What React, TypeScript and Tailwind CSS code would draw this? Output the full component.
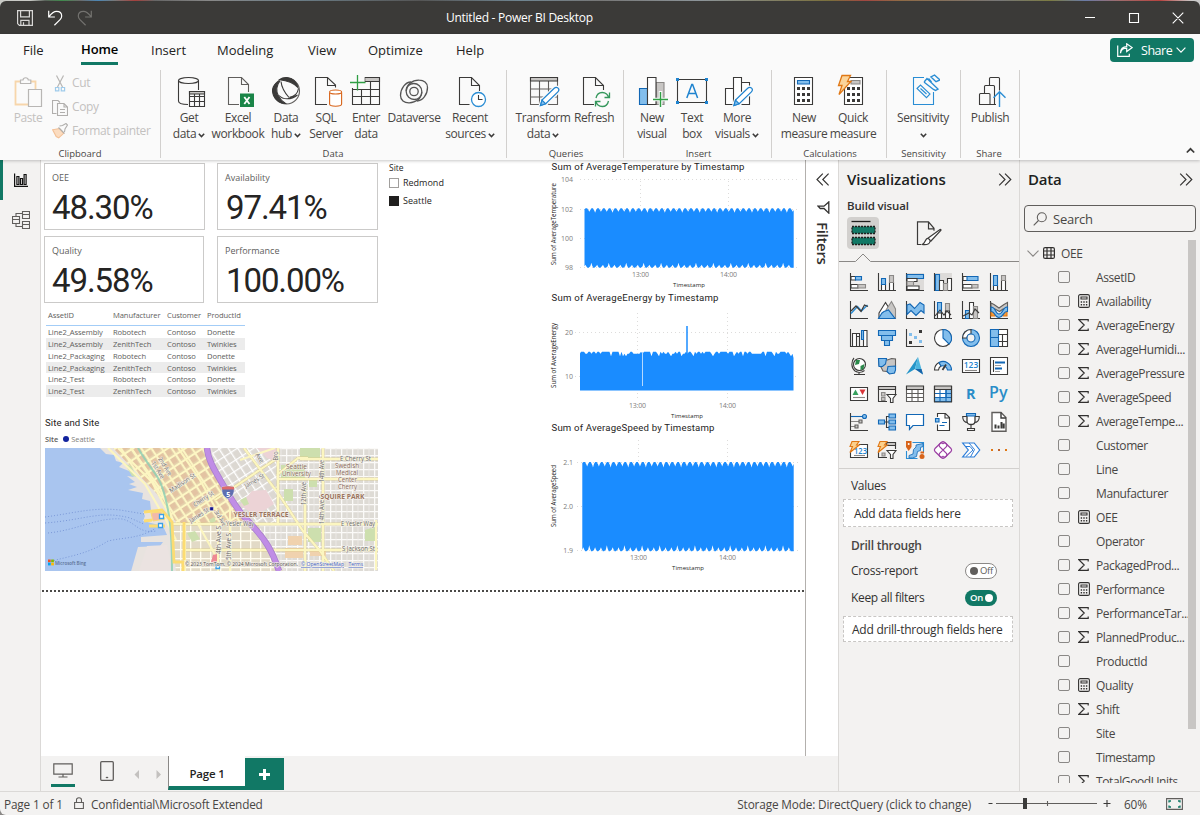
import React from "react";

const D = "#3b3a39";
const B = "#1267b5";
const L = "#83beec";
const G = "#c8c6c4";

/* ---------- shared bits ---------- */

function Chev({ className = "" }: { className?: string }) {
  return (
    <svg className={className} width="7" height="5" viewBox="0 0 7 5" fill="none" stroke={D} strokeWidth="1.5">
      <path d="M0.8 0.8 3.5 3.6 6.2 0.8" />
    </svg>
  );
}

function DoubleChevron({ left = false }: { left?: boolean }) {
  return (
    <svg width="14" height="13" viewBox="0 0 14 13" fill="none" stroke="#323130" strokeWidth="1.15">
      {left ? <path d="M6.8.7 1 6.5l5.8 5.8M12.6.7 6.8 6.5l5.8 5.8" /> : <path d="M1.2.7 7 6.5l-5.8 5.8M7 .7l5.8 5.8L7 12.3" />}
    </svg>
  );
}

/* ---------- title bar ---------- */

function TitleBar() {
  return (
    <div className="flex h-[34px] shrink-0 bg-[linear-gradient(90deg,#c9cac6_0_30px,#5b625b_45px,#3f8a4c_62px,#6a6a6a_80px,#4c86b4_98px,#777_115px,#a5403c_135px,#666_155px,#888_210px,#6a7c86_300px,#555_420px,#6f8591_520px,#777_600px,#8c9499_700px,#7a6f3c_830px,#a14741_865px,#8f6a45_900px,#777_1000px,#7c7b42_1050px,#6a7ba6_1085px,#a06b6b_1120px,#b6433f_1160px,#c9c9c9_1192px)] pt-px">
      <div className="flex h-[33px] w-full items-center rounded-t-[6px] bg-[#3b3a38]">
        <svg className="ml-4 mt-px" width="80" height="18" viewBox="16 9 80 18" fill="none" stroke="#d8d7d6" strokeWidth="1.2">
          <path d="M17.6 10.6h14.8v14.8H19.4l-1.8-1.8zM20.6 10.6v6.2h8.8v-6.2M20.8 25.4v-5h8.2v5M23.5 22.3v3" />
          <path d="M48.7 10.8v6.2h6.2M49 16.6c2.4-3 4.700-5.200 7.500-5.200 3.400 0 5.200 2.200 5.200 4.700 0 1.600-.6 2.600-1.600 3.600l-5.700 5.500" stroke="#fff" />
          <path d="M91.300 10.800v6.200h-6.200M91 16.600c-2.400-3-4.700-5.200-7.500-5.200-3.400 0-5.200 2.200-5.200 4.700 0 1.600.6 2.600 1.600 3.600l5.700 5.500" stroke="#73726f" />
        </svg>
        <div className="ml-[350px] mt-px whitespace-nowrap font-['Open_Sans','Noto_Sans',sans-serif] text-[12px] tracking-[-0.26px] text-white">Untitled - Power BI Desktop</div>
        <svg className="ml-auto mr-[15px]" width="101" height="14" viewBox="1084 11 101 14" fill="none" stroke="#fff" strokeWidth="1.1">
          <path d="M1085 17.500h10M1129.500 13.500h9v9h-9zM1172.700 12.700l10.600 10.600M1183.300 12.700l-10.600 10.600" />
        </svg>
      </div>
    </div>
  );
}

/* ---------- ribbon ---------- */

const tabs: [string, string][] = [
  ["File", "w-[58px]"],
  ["Home", "w-[70px]"],
  ["Insert", "w-[66px]"],
  ["Modeling", "w-[91px]"],
  ["View", "w-[60px]"],
  ["Optimize", "w-[88px]"],
  ["Help", "w-[60px]"],
];

function Pencil({ x, y }: { x: number; y: number }) {
  return (
    <g transform={`translate(${x} ${y})`}>
      <path d="M0 19 1.800 12.800 14.200.900c1.500-1.300 3.400-.9 4.300.1s1 2.700-.2 4L6 17.300z" fill="#fff" stroke="#fafafa" strokeWidth="3" />
      <path d="M.5 18.500 2 13 14.200 1.200c1.300-1.200 3-.9 3.900 0s1 2.400-.2 3.600L5.700 16.800z" fill="#fff" stroke="#1e83cf" strokeWidth="1.2" />
      <path d="M.5 18.500 2 13l3.700 3.800z" fill={L} stroke="#1e83cf" />
    </g>
  );
}

const ribbonIcons: Record<string, React.ReactNode> = {
  get: (
    <g>
      <path d="M188 104.500c-6 0-9.500-1.500-9.500-3.500V80.500M198.500 80.500V90" />
      <ellipse cx="188.500" cy="80.500" rx="10" ry="3" />
      <path d="M189.500 91.500h15v15h-15zM189.500 96.500h15M189.500 101.500h15M194.500 94v12M199.500 94v12" />
      <path d="M189.500 91.500h15v2.500h-15z" fill={G} />
    </g>
  ),
  excel: (
    <g>
      <path d="M239 104.500H228.500V77.500H241.500l7 7V92M241.500 77.500v7h7" stroke="#605e5c" />
      <path d="M240 93.500h14v13.500h-14z" fill="#1a8548" stroke="none" />
      <path d="M244.300 97l5.200 7M249.500 97l-5.200 7" stroke="#fff" strokeWidth="1.800" />
    </g>
  ),
  hub: (
    <g>
      <circle cx="286.500" cy="91" r="13" stroke="#605e5c" />
      <path d="M280 81c-3.500 4-4.500 10-1.500 15 1.500 3 4 5.500 7 7.500-5 .3-10-3-12-8-2.500-6.500 0-12 6.500-14.500z" fill={D} />
      <path d="M279.500 79.700c4-3.300 11-2.800 14.500.8 2 2 3.500 4.500 3.800 7-4-4.500-10.500-7-18.300-7.800z" fill={D} />
      <path d="M281 81.500c.5 5 3.500 11 8 16M279 95.500c4 4.500 12 4.500 18.500-.5M298.500 88.500c-.8 5-4.500 8-9 8.800" />
    </g>
  ),
  sql: (
    <g>
      <path d="M327 104.500H315.500V77.500H327.500l8 7.500v2.500M327.500 77.500V85.500h8" />
      <path d="M329.600 92.500v11.500c0 3 12 3 12 0V92.500" stroke="#d8641a" fill="#fff" />
      <ellipse cx="335.600" cy="92" rx="6" ry="2" stroke="#d8641a" fill="#fff" />
    </g>
  ),
  enter: (
    <g>
      <path d="M365 77.500h14.500v4H365z" fill={G} stroke="#8a8886" />
      <path d="M352.500 88v16.500h27V77.500H365M352.500 89.500h27M352.500 96.500h27M361.500 89v15M370.500 82v22M365 81.500h14.500" />
      <path d="M357.500 75v15.500M350 82.500h15.500" stroke="#2f9e44" strokeWidth="1.300" />
    </g>
  ),
  dataverse: (
    <g strokeWidth="1.300" stroke="#555">
      <circle cx="414" cy="91.500" r="4.200" />
      <path d="M421.800 92c0 4.500-3.500 7.500-7.600 7.500s-8-3.500-8-8c0-7 6-11.500 13-11.300 4.500 0 8.300 2.700 8.300 7.200 0 7.300-5 13.600-10.500 13.600" />
      <path d="M406.200 91c0-4.500 3.500-7.500 7.600-7.500s8 3.500 8 8c0 7-6 11.500-13 11.300-4.500 0-8.300-2.700-8.300-7.200 0-7.300 5-13.600 10.500-13.600" />
    </g>
  ),
  recent: (
    <g>
      <path d="M469.500 104.500H459.500V77.500H471.500l8 8V91M471.500 77.500v8h8" />
      <circle cx="478.500" cy="99.500" r="7" stroke="#2a8dd4" fill="#fff" strokeWidth="1.300" />
      <path d="M478.500 95v4.500h4" />
    </g>
  ),
  transform: (
    <g>
      <path d="M530.500 77.500h27v27h-27zM530.500 89h27M530.500 97h27M539.500 81v23M548.500 81v23" stroke="#605e5c" />
      <path d="M530.500 77.500h27v3.500h-27z" fill={G} />
      <Pencil x={540} y={87} />
    </g>
  ),
  refresh: (
    <g>
      <path d="M594 104.500H583.500V77.500H595.500l8 8V90M595.500 77.500v8h8" />
      <path d="M596 98c.8-3.600 3-5.500 6.200-5.500 3.500 0 6 2.500 6.300 5M609.500 92.500v5h-5M608.500 101c-.8 3.600-3 5.500-6.200 5.500-3.500 0-6-2.500-6.300-5M595.500 106.500v-5h5" stroke="#35975c" strokeWidth="1.300" />
    </g>
  ),
  newvisual: (
    <g>
      <path d="M639.500 88.500h8v16h-8z" fill={L} stroke={B} />
      <path d="M656 82.500h8v22h-8z" fill={G} stroke="#8a8886" />
      <path d="M647.500 77.500h8.500v27h-8.500z" fill="#fff" />
      <path d="M660.500 91v16M655 99.500h14" stroke="#fafafa" strokeWidth="3.500" />
      <path d="M660.500 92v15M653 99.500h15" stroke="#2f9e44" strokeWidth="1.400" />
    </g>
  ),
  textbox: (
    <g>
      <path d="M677.500 79.500h29v23h-29z" />
      <path d="M676 78h3v3h-3zM705 78h3v3h-3zM676 101h3v3h-3zM705 101h3v3h-3z" fill="#1e83cf" stroke="none" />
      <path d="M686.800 98l5-13.500h.8l5 13.500M688.500 93.500h7.400" stroke="#1e83cf" strokeWidth="1.500" />
    </g>
  ),
  more: (
    <g>
      <path d="M725.500 88.500h8v16h-8zM733.500 77.500h8v27h-8zM741.500 82.500h8v22h-8z" fill="#fff" />
      <Pencil x={733.500} y={87} />
    </g>
  ),
  measure: (
    <g>
      <path d="M794.500 77.500h18v27h-18z" fill="#fff" />
      <path d="M797.500 80.500h12v3.500h-12z" fill={L} stroke={B} />
      <g fill={D} stroke="none">
        {[87, 93, 99].map((y) => [797, 802, 807].map((x) => <path key={`${x}-${y}`} d={`M${x} ${y}h3v3h-3z`} />))}
      </g>
    </g>
  ),
  quick: (
    <g>
      <path d="M844.500 77.500h18v27h-18z" fill="#fff" />
      <path d="M851 80.500h9v3.500h-9z" fill={G} stroke="#8a8886" />
      <g fill={D} stroke="none">
        {[87, 93, 99].map((y) => [847, 852, 857].map((x) => <path key={`${x}-${y}`} d={`M${x} ${y}h3v3h-3z`} />))}
      </g>
      <path d="M842 75.500h8.500l-3 6h3.500l-12 13 3-9h-3.500z" fill="#fbd59b" stroke="#e07714" strokeWidth="1.300" />
    </g>
  ),
  sensitivity: (
    <g stroke="#2a8dd4">
      <path d="M924 77.500H913.500v27h20V92" />
      <path d="M917 88.500l3.500-3.500 9.500 9-3.500 3.700zM920.500 88.500l6 5.500" />
      <path d="M924.500 81.500l2.500-3 11 10.500-2.500 1.500-2-1-9-7zM931.500 82l-3-3.500M931 77l5 4.700 4-1.700-5.500-5z" strokeWidth="1.400" />
    </g>
  ),
  publish: (
    <g>
      <path d="M979.500 104.500v-10q0-1 1-1h8.500q1 0 1 1v10zM984.500 93v-6.500q0-1 1-1h8q1 0 1 1v18H990M989.500 85v-6.500q0-1 1-1h8q1 0 1 1v12M994.500 104.500h1.500" />
      <path d="M999.500 107V92M993.500 97.800l6-6 6 6" stroke="#2a8dd4" strokeWidth="1.400" />
    </g>
  ),
};

type Btn = { icon: string; cx: number; w: string; a: string; b?: string; chev?: boolean };

const groups: { name: string; box: string; items: Btn[] }[] = [
  {
    name: "Data",
    box: "w-[346px] pl-[5px]",
    items: [
      { icon: "get", cx: 189, w: "w-[46px]", a: "Get", b: "data", chev: true },
      { icon: "excel", cx: 238, w: "w-[52px]", a: "Excel", b: "workbook" },
      { icon: "hub", cx: 286, w: "w-[44px]", a: "Data", b: "hub", chev: true },
      { icon: "sql", cx: 326, w: "w-[36px]", a: "SQL", b: "Server" },
      { icon: "enter", cx: 366, w: "w-[44px]", a: "Enter", b: "data" },
      { icon: "dataverse", cx: 414, w: "w-[52px]", a: "Dataverse" },
      { icon: "recent", cx: 470, w: "w-[60px]", a: "Recent", b: "sources", chev: true },
    ],
  },
  {
    name: "Queries",
    box: "w-[117px] pl-2",
    items: [
      { icon: "transform", cx: 543, w: "w-[56px]", a: "Transform", b: "data", chev: true },
      { icon: "refresh", cx: 594, w: "w-[46px]", a: "Refresh" },
    ],
  },
  {
    name: "Insert",
    box: "w-[148px] pl-2",
    items: [
      { icon: "newvisual", cx: 652, w: "w-[40px]", a: "New", b: "visual" },
      { icon: "textbox", cx: 692, w: "w-[40px]", a: "Text", b: "box" },
      { icon: "more", cx: 737, w: "w-[50px]", a: "More", b: "visuals", chev: true },
    ],
  },
  {
    name: "Calculations",
    box: "w-[115px] pl-2",
    items: [
      { icon: "measure", cx: 804, w: "w-[48px]", a: "New", b: "measure" },
      { icon: "quick", cx: 853, w: "w-[50px]", a: "Quick", b: "measure" },
    ],
  },
  { name: "Sensitivity", box: "w-[74px] pl-1.5", items: [{ icon: "sensitivity", cx: 923, w: "w-[60px]", a: "Sensitivity", b: "", chev: true }] },
  { name: "Share", box: "w-[59px] pl-1", items: [{ icon: "publish", cx: 990, w: "w-[50px]", a: "Publish" }] },
];

function RibbonButton({ icon, cx, w, a, b, chev }: Btn) {
  return (
    <div className={`flex ${w} flex-col items-center text-[12px] leading-4 tracking-[-0.38px] text-[#484644]`}>
      <svg width="34" height="36" viewBox={`${cx - 17} 72 34 36`} fill="none" stroke={D} strokeWidth="1.1">
        {ribbonIcons[icon]}
      </svg>
      <div className="mt-0.5 whitespace-nowrap">{a}</div>
      <div className="flex h-4 items-center gap-0.5 whitespace-nowrap">
        {b && <span>{b}</span>}
        {chev && <Chev className="mt-0.5" />}
      </div>
    </div>
  );
}

function Ribbon() {
  return (
    <div className="z-10 flex h-[126px] shrink-0 flex-col bg-[#fafafa] shadow-[0_1px_3px_rgba(0,0,0,0.22)]">
      <div className="flex h-8 pl-[23px] text-[13px] text-[#242322]">
        {tabs.map(([t, w]) => (
          <div key={t} className={w}>
            <div className={`inline-flex h-[31px] items-center whitespace-nowrap ${t === "Home" ? "border-b-[3px] border-[#117865] pt-1 font-semibold text-black tracking-[-0.1px]" : "pt-0.5"}`}>{t}</div>
          </div>
        ))}
        <div className="ml-auto mr-1.5 mt-1 flex h-6 w-[84px] items-center rounded bg-[#117865] pl-[7px] text-[12.5px] tracking-[-0.45px] text-white">
          <svg width="16" height="14" viewBox="0 0 16 14" fill="none" stroke="#fff" strokeWidth="1.200">
            <path d="M.7 2.500v10.800h11.600v-2.500M3.500 10.200c.5-3.400 2.800-5 6.200-5V8.500L15.200 4.600 9.700.8v2.700C6 3.500 3.400 6 3.500 10.200z" />
          </svg>
          <span className="ml-2 mt-0.5">Share</span>
          <svg className="ml-1" width="10" height="6" viewBox="0 0 10 6" fill="none" stroke="#fff" strokeWidth="1.200"><path d="M.6.700 5 5.100 9.400.7" /></svg>
        </div>
      </div>
      <div className="flex h-[94px] pt-[4px]">
        <div className="flex h-[88px] w-[161px] flex-col border-r border-[#d2d0ce] text-[12px] tracking-[-0.38px] text-[#c3c1bf]">
          <div className="flex h-[78px] shrink-0">
            <div className="ml-3.5 mt-[4px] flex w-[28px] flex-col items-center">
              <svg className="shrink-0" width="32" height="34" viewBox="14 74 32 34" fill="none" stroke="#b8b6b4" strokeWidth="1.200">
                <path d="M22 81.500H17.500v23H30M33 81.500h4.500V89" stroke="#f7d6ab" strokeWidth="1.800" />
                <path d="M22.500 83.500v-3.500h2.500c.3-3 5-3 5.300 0h2.500v3.500z" />
                <path d="M30.500 89.500h13v17h-13z" fill="#fafafa" />
              </svg>
              <div className="mt-0.5 leading-4">Paste</div>
            </div>
            <div className="ml-2.5 mt-px flex flex-col">
              <div className="flex h-6 items-center gap-1">
                <svg width="16" height="18" viewBox="52 73 16 18" fill="none" stroke="#b8b6b4" strokeWidth="1.200">
                  <path d="M56.500 74.500l6 11.500M63.500 74.500l-6 11.500" />
                  <path d="M55.500 86.500h3.300v3.300h-3.300zM61.300 86.500h3.300v3.300h-3.300z" stroke="#9fcbeb" />
                </svg>
                <span>Cut</span>
              </div>
              <div className="flex h-6 items-center gap-1">
                <svg width="16" height="17" viewBox="52 97 16 17" fill="none" stroke="#b0aeac" strokeWidth="1.100">
                  <path d="M56.500 111.500h-4v-13h5.500l2 2M57.500 101.500h6.500l3.500 3.500v8.500h-10zM64 101.500v3.500h3.500M60 107.500h5M60 110.500h5" />
                </svg>
                <span>Copy</span>
              </div>
              <div className="flex h-6 items-center gap-1">
                <svg width="16" height="16" viewBox="52 121 16 16" fill="none" stroke="#b0aeac" strokeWidth="1.100">
                  <path d="M52.700 127.800l6.800-1.300 4.200 4.800-5 4.500-2.500-1.300z" fill="#fbdcc0" stroke="#f3c096" />
                  <path d="M58.500 125.500l6 6M59.500 124l3-.5 3.500-2 1.500 1.500-2.500 4-.5 3" />
                </svg>
                <span>Format painter</span>
              </div>
            </div>
          </div>
          <div className="text-center text-[9.500px] leading-3 tracking-normal text-[#484644]">Clipboard</div>
        </div>
        {groups.map((g) => (
          <div key={g.name} className={`flex h-[88px] flex-col border-r border-[#d2d0ce] ${g.box}`}>
            <div className="mt-[2px] flex h-[76px] shrink-0">{g.items.map((i) => <RibbonButton key={i.icon} {...i} />)}</div>
            <div className="-ml-1.5 text-center text-[9.500px] leading-3 text-[#484644]">{g.name}</div>
          </div>
        ))}
        <svg className="mb-1.5 ml-auto mr-[5px] self-end" width="9" height="7" viewBox="0 0 9 7" fill="none" stroke={D} strokeWidth="1.700"><path d="M.8 5.500 4.500 1.800 8.200 5.500" /></svg>
      </div>
    </div>
  );
}

/* ---------- report canvas ---------- */

function Kpi({ name, value, w, pad = "" }: { name: string; value: string; w: string; pad?: string }) {
  return (
    <div className={`h-[67px] ${w} border border-[#cbcac9] bg-white pl-[7px] pt-1.5 text-[#252423]`}>
      <div className="text-[9px] leading-4 text-[#605e5c]">{name}</div>
      <div className={`mt-0.5 font-['Roboto',sans-serif] text-[33px] leading-[40px] tracking-[-1.1px] ${pad}`}>{value}</div>
    </div>
  );
}

const rows = [
  ["Line2_Assembly", "Robotech", "Contoso", "Donette"],
  ["Line2_Assembly", "ZenithTech", "Contoso", "Twinkies"],
  ["Line2_Packaging", "Robotech", "Contoso", "Donette"],
  ["Line2_Packaging", "ZenithTech", "Contoso", "Twinkies"],
  ["Line2_Test", "Robotech", "Contoso", "Donette"],
  ["Line2_Test", "ZenithTech", "Contoso", "Twinkies"],
];

function AssetTable() {
  const cols = "grid grid-cols-[65px_54px_40px_38px] pl-0.5";
  return (
    <div className="ml-0.5 w-[199px] text-[7.600px] tracking-[-0.1px] text-[#605e5c]">
      <div className={`${cols} h-[23px] border-b border-[#a3cdf7] pt-[6px] leading-3`}>
        {["AssetID", "Manufacturer", "Customer", "ProductId"].map((h) => <div key={h}>{h}</div>)}
      </div>
      {rows.map((r, i) => (
        <div key={i} className={`${cols} h-[11.850px] items-center whitespace-nowrap pt-px leading-[11px] ${i % 2 ? "bg-[#ececec]" : ""}`}>
          {r.map((c, j) => <div key={j}>{c}</div>)}
        </div>
      ))}
    </div>
  );
}

const mapLabels: [string, number, number, number, number, string][] = [
  ["Seattle", 286, 469, 21, 0, "#8a6a5c"],
  ["University", 282, 476, 29, 0, "#8a6a5c"],
  ["Swedish", 335, 468, 24, 0, "#8a6a5c"],
  ["Medical", 336, 475, 22, 0, "#8a6a5c"],
  ["Center", 338, 482, 19, 0, "#8a6a5c"],
  ["Cherry", 338, 489, 19, 0, "#8a6a5c"],
  ["E Cherry St", 340, 461, 31, 0, "#6d6b68"],
  ["Yesler Way", 226, 526, 28, 0, "#6d6b68"],
  ["E Yesler Way", 341, 526, 34, 0, "#6d6b68"],
  ["S Jackson St", 342, 551, 33, 0, "#6d6b68"],
  ["Madison St", 171, 493, 30, -34, "#6d6b68"],
  ["Cherry St", 195, 507, 23, -34, "#6d6b68"],
  ["James St", 246, 488, 22, -30, "#6d6b68"],
  ["James St", 191, 523, 22, -33, "#6d6b68"],
  ["1st Ave", 151, 463, 19, 58, "#6d6b68"],
  ["2nd Ave", 158, 459, 20, 58, "#6d6b68"],
  ["4th Ave S", 221, 554, 28, -90, "#6d6b68"],
  ["5th Ave S", 231, 560, 27, -90, "#6d6b68"],
  ["12th Ave", 306, 505, 23, -90, "#6d6b68"],
  ["14th Ave", 324, 482, 22, -90, "#6d6b68"],
  ["14th Ave S", 324, 524, 29, -90, "#6d6b68"],
  ["Ave", 255, 455, 10, 55, "#6d6b68"],
  ["Bro", 278, 460.5, 9, -90, "#6d6b68"],
  ["3rd Ave", 214, 512, 17, 58, "#6d6b68"],
];

function SeattleMap() {
  return (
    <svg width="333" height="123" viewBox="45 448 333 123" fontFamily="'Open Sans','Noto Sans',sans-serif">
      <defs>
        <pattern id="downtown" width="8.500" height="9.500" patternUnits="userSpaceOnUse" patternTransform="rotate(-33 150 500)">
          <rect width="8.500" height="9.500" fill="#e6d5ae" />
          <rect x="2" y="2" width="5.500" height="6" fill="#e3c3a2" />
          <path d="M0 .8H8.500M.8 0V9.500" stroke="#fdf7c4" strokeWidth="2" />
        </pattern>
        <pattern id="hill" width="8" height="9" patternUnits="userSpaceOnUse" patternTransform="rotate(-33 250 450)">
          <rect width="8" height="9" fill="#dcd8d2" />
          <path d="M0 .6H8M.6 0V9" stroke="#fff" strokeWidth="1.500" />
        </pattern>
        <pattern id="east" width="11" height="7" patternUnits="userSpaceOnUse">
          <rect width="11" height="7" fill="#dedbd5" />
          <path d="M0 .6H11M.6 0V7" stroke="#fbfaf8" strokeWidth="1.400" />
          <path d="M6 0v7" stroke="#efece8" strokeWidth=".8" />
        </pattern>
        <pattern id="south" width="10" height="9" patternUnits="userSpaceOnUse">
          <rect width="10" height="9" fill="#e2dac6" />
          <path d="M0 .6H10M.6 0V9" stroke="#fffdf0" strokeWidth="1.500" />
        </pattern>
      </defs>
      <path d="M45 448h333v123H45z" fill="#a9c5ef" />
      <path d="M100 448l6 6 8 1 2 6 7 2-4 4 10 4 5 6-7-1 8 6-6 2 8 3-9 3 15 3-1 6 8 2 1 9-8 2 2 4-2 5 12 3 8 2 4 9-26 2v5h22l-3 4-22 1-8 28h243V448z" fill="#e8e3df" />
      <path d="M147 546l20-1 6 26h-34z" fill="#ebe3e1" />
      <path d="M113 448h94l6 20 12 20 24 33-72 3-20-30z" fill="url(#downtown)" />
      <path d="M212 448h66v76h-28l-20-32-17-28z" fill="url(#hill)" />
      <path d="M278 448h100v76H278z" fill="url(#east)" />
      <path d="M170 524h88l25 47H176z" fill="url(#south)" />
      <path d="M258 524h120v47h-92z" fill="url(#east)" />
      <path d="M240 505l12-14 14-1 8 14-18 12zM257 448h20v14l-10-4z" fill="#ecd3d6" />
      <path d="M300 448h20v10h-20zM281 465h24v13h-24zM284 489h9v12h-9zM308 528h13v14h-13zM365 530l12-4v15h-12zM240 500l6-3 3 7-5 2zM187 533l8-2 5 8-8 3zM209 520l5-3 2 4-5 3zM309 480h8v7h-8zM125 464l6 2 6 11-5-1z" fill="#cddfae" />
      <path d="M288 536h14v9h-14zM285 548h18v10h-18zM310 550h16v6h-16z" fill="#f0d2ae" />
      <g fill="none" stroke="#d9cb86" strokeWidth="2.800" opacity=".75">
        <path d="M244 448l34 45 25 38 17 20 14 20M278 448v76M305 486v85M323 448v123M300 459h78M278 479h100M170 524h208M185 550h193M277 475l21-17h10M215 500l64-43" />
      </g>
      <g fill="none" stroke="#fcf6c0" strokeWidth="2.100">
        <path d="M108 448l37 36 21 36 10 20M118 448l34 34 20 38M131 448l30 42 12 30M178 448l22 32 22 40M244 448l34 45 25 38 17 20 14 20M278 448v76M305 486v85M323 448v123M300 459h78M278 479h100M170 524h208M185 550h193M277 475l21-17h10M215 500l64-43M230 507v64M218 524v47M185 524v47M193 515l25 45M240 460l35-12M376 520v50" />
      </g>
      <path d="M138 448c8 14 14 20 20 30s8 22 10 32 4 24 4 61" fill="none" stroke="#8fd0b4" strokeWidth="2" opacity=".85" />
      <path d="M144 512l18-2 10 12 2 40 9 0v9M144 521l8-1M149 526h16M184 560v-38" fill="none" stroke="#fcdc72" strokeWidth="2.800" />
      <path d="M151 513l10-1 4 7-12 2z" fill="#f1b9ab" stroke="#fcdc72" />
      <path d="M207 448c1 12 8 23 15 35 8 14 15 27 27 39 16 17 23 28 30 49" fill="none" stroke="#a980cc" strokeWidth="6.400" />
      <path d="M207 448c1 12 8 23 15 35 8 14 15 27 27 39 16 17 23 28 30 49" fill="none" stroke="#c08de6" strokeWidth="4.800" />
      <g fill="none" stroke="#6d8cd0" strokeWidth=".8" strokeDasharray="1 2">
        <path d="M45 517c30-4 48-10 75-7l24 4M45 523c40-3 55-13 85-5l14 6M48 533c30-3 50-16 74-14 14 3 16 15 34 12M48 562c22-6 40-8 60-21 18-4 30-2 48-13" />
      </g>
      <g fill="#fff" stroke="#3aa0e8" strokeWidth="1.300"><path d="M159.500 514.500h4v4h-4zM158.500 523.500h4v4h-4zM216 565h3.500v3.500H216z" /></g>
      <path d="M213 555l4-1v8h-6z" fill="#ee8a94" />
      <path d="M222 487c4-1 8-1 12 0 1 7-2 10-6 12-4-2-7-5-6-12z" fill="#5f6fb0" stroke="#fff" strokeWidth=".5" />
      <path d="M222 487c4-1 8-1 12 0v2.500h-12z" fill="#dd6b6b" />
      <text x="226.200" y="496.500" fontSize="7" fontWeight="700" fill="#fff">5</text>
      <path d="M209.800 507h3.600v3.600h-3.600z" fill="#14148f" stroke="#fff" strokeWidth=".4" />
      <g fontSize="6.200" paintOrder="stroke" stroke="#f4f1ec" strokeWidth="1.300" strokeOpacity=".8">
        {mapLabels.map(([t, x, y, w, r, c], i) => (
          <text key={i} x={x} y={y} textLength={w} lengthAdjust="spacingAndGlyphs" transform={`rotate(${r} ${x} ${y})`} fill={c}>{t}</text>
        ))}
        <text x="320.500" y="498.500" fontSize="7" fontWeight="700" textLength="44" lengthAdjust="spacingAndGlyphs" fill="#9c7560">SQUIRE PARK</text>
        <text x="233.500" y="516.500" fontSize="7" fontWeight="700" textLength="55" lengthAdjust="spacingAndGlyphs" fill="#9c7560">YESLER TERRACE</text>
        <text x="185" y="566.200" fontSize="5" textLength="113" lengthAdjust="spacingAndGlyphs" fill="#55534f">© 2023 TomTom, © 2024 Microsoft Corporation,</text>
        <text x="301" y="566.200" fontSize="5.200" textLength="43" lengthAdjust="spacingAndGlyphs" fill="#3f5fc4" textDecoration="underline">© OpenStreetMap</text>
        <text x="348.500" y="566.200" fontSize="5.200" textLength="14.500" lengthAdjust="spacingAndGlyphs" fill="#3f5fc4" textDecoration="underline">Terms</text>
      </g>
      <path d="M48 559.500h2.700v2.700H48z" fill="#f25022" /><path d="M51.200 559.500h2.700v2.700h-2.700z" fill="#7fba00" />
      <path d="M48 562.700h2.700v2.700H48z" fill="#00a4ef" /><path d="M51.200 562.700h2.700v2.700h-2.700z" fill="#ffb900" />
      <text x="55" y="564.500" fontSize="5.600" fontWeight="600" textLength="31" lengthAdjust="spacingAndGlyphs" fill="#5a6f94">Microsoft Bing</text>
    </svg>
  );
}

function teeth(x0: number, x1: number, top: number, bottom: number, n: number, depth: number) {
  const s = (x1 - x0) / n;
  let d = `M${x0} ${top + 1}`;
  for (let i = 0; i < n; i++) {
    const k = i % 3 === 1 ? depth + 1 : depth;
    const x = x0 + i * s;
    d += `L${x + s * 0.2} ${top}L${x + s * 0.45} ${top}L${x + s * 0.72} ${top + k * 0.6}L${x + s * 0.82} ${top + k}L${x + s} ${top + 1.8}`;
  }
  d += `L${x1} ${bottom}`;
  for (let i = n - 1; i >= 0; i--) {
    const k = i % 3 === 1 ? depth + 1.500 : depth - 0.500;
    const x = x0 + i * s;
    d += `L${x + s * 0.7} ${bottom}L${x + s * 0.5} ${bottom}L${x + s * 0.3} ${bottom - k * 0.5}L${x + s * 0.18} ${bottom - k}L${x} ${bottom - 1.5}`;
  }
  return d + "Z";
}

function energy() {
  let d = "M580 390.500V353.500";
  for (let x = 581; x < 793; x += 1.5) {
    const h = Math.abs(Math.sin(x * 12.9898) * 43758.5453) % 1;
    d += `L${x} ${351.8 + (h > 0.9 ? 4.5 : h > 0.6 ? 2 : 0)}`;
  }
  return d + "L793.500 358V390.500Z";
}

type ChartProps = {
  y0: number; h: number; title: [string, number, number]; axis: [string, number, number];
  ticks: [string, number][]; vx: [number, number]; vy: [number, number]; timeY: number; stampX: number; hx: number; path: string;
  children?: React.ReactNode;
};

function Chart({ y0, h, title, axis, ticks, vx, vy, timeY, stampX, hx, path, children }: ChartProps) {
  return (
    <svg width="250" height={h} viewBox={`548 ${y0} 250 ${h}`} fontFamily="'Open Sans','Noto Sans',sans-serif" fontSize="7">
      <text x="551.500" y={title[1]} fontSize="9.600" fontFamily="Roboto,sans-serif" textLength={title[2]} fill="#252423">{title[0]}</text>
      <g stroke="#dddcdb" strokeWidth="1" strokeDasharray="1 3">
        {ticks.map(([t, y]) => <path key={t} d={`M${hx} ${y}H798`} />)}
        {vx.map((x) => <path key={x} d={`M${x} ${vy[0]}V${vy[1]}`} />)}
      </g>
      <path d={path} fill="#1a8cff" />
      {children}
      {ticks.map(([t, y]) => <text key={t} x="573" y={y + 2.500} textAnchor="end" fill="#807e7c">{t}</text>)}
      <text x={vx[0]} y={timeY} textAnchor="middle" fill="#807e7c" textLength="17">13:00</text>
      <text x={vx[1]} y={timeY} textAnchor="middle" fill="#807e7c" textLength="17">14:00</text>
      <text x={stampX} y={timeY + 10} textAnchor="middle" fontSize="6" textLength="32" fill="#252423">Timestamp</text>
      <text x="556" y={axis[1]} transform={`rotate(-90 556 ${axis[1]})`} fontSize="6.200" textLength={axis[2]} lengthAdjust="spacingAndGlyphs" fill="#252423">{axis[0]}</text>
    </svg>
  );
}

function Canvas() {
  return (
    <div className="h-[596px] w-[765px] shrink-0 border-r border-[#b3b0ad] bg-white">
      <div className="flex h-[432px] bg-[repeating-linear-gradient(90deg,transparent_0_1px,#4b4a48_1px_3px,transparent_3px_4px)] bg-[length:100%_2px] bg-bottom bg-no-repeat">
        <div className="flex w-[345px] flex-col pl-[3px] pt-[3px]">
          <div className="flex gap-3">
            <Kpi name="OEE" value="48.30%" w="w-[161px]" />
            <Kpi name="Availability" value="97.41%" w="w-[161px]" pad="pl-px" />
          </div>
          <div className="mt-1.5 flex gap-[13px]">
            <Kpi name="Quality" value="49.58%" w="w-[160px]" />
            <Kpi name="Performance" value="100.00%" w="w-[161px]" pad="pl-px" />
          </div>
          <AssetTable />
          <div className="ml-px mt-[20px] font-['Roboto',sans-serif] text-[9.600px] leading-3 tracking-[0.1px] text-[#252423]">Site and Site</div>
          <div className="ml-px mt-[4px] flex items-center text-[7.400px] leading-3 text-[#807e7c]">
            <span className="font-semibold text-[#605e5c]">Site</span>
            <span className="ml-[5px] mr-0.5 h-1.5 w-1.5 rounded-full bg-[#12239e]" />
            <span>Seattle</span>
          </div>
          <div className="ml-px mt-[3px]"><SeattleMap /></div>
        </div>
        <div className="w-[162px] pl-[3px] pt-[2px] text-[9px] text-[#252423]">
          <div className="text-[8.500px] leading-3">Site</div>
          <div className="flex h-[18px] items-center"><span className="mr-1 h-2.5 w-2.5 border border-[#a19f9d]" />Redmond</div>
          <div className="flex h-[18px] items-center"><span className="mr-1 h-2.5 w-2.5 bg-[#201f1e]" />Seattle</div>
        </div>
        <div className="flex flex-col">
          <Chart y0={160} h={130} title={["Sum of AverageTemperature by Timestamp", 170, 193]} axis={["Sum of AverageTemperature", 265, 82]}
            ticks={[["104", 179.500], ["102", 209.500], ["100", 238.500], ["98", 267.500]]} vx={[640.500, 728.500]} vy={[181, 267]} timeY={277} stampX={689} hx={580}
            path={teeth(584.500, 793.700, 208.300, 267.800, 36, 3.500)} />
          <Chart y0={290} h={130} title={["Sum of AverageEnergy by Timestamp", 301, 167]} axis={["Sum of AverageEnergy", 388, 65]}
            ticks={[["20", 332.500], ["10", 376.500]]} vx={[637.500, 727.500]} vy={[313, 400]} timeY={408} stampX={687} hx={575} path={energy()}>
            <path d="M687 326v28" stroke="#1a8cff" strokeWidth="1.500" />
            <path d="M642.500 352v34" stroke="#b4d9ff" strokeWidth="1" />
          </Chart>
          <Chart y0={420} h={160} title={["Sum of AverageSpeed by Timestamp", 431, 163]} axis={["Sum of AverageSpeed", 527, 62]}
            ticks={[["2.1", 462.500], ["2.0", 506.500], ["1.9", 550.500]]} vx={[638.500, 727.500]} vy={[440, 551]} timeY={560} stampX={688} hx={577}
            path={teeth(582.300, 793.700, 462, 551.200, 36, 4.500)} />
        </div>
      </div>
    </div>
  );
}

/* ---------- visualizations pane ---------- */

const Ax = <path d="M.5 0v17.500H18" />;

function Bolt() {
  return <path d="M2 .5h7L6.500 4h2.800L0 11.500l2.500-6H0z" fill="#fbd08c" stroke="#e07714" />;
}

const vizIcons: React.ReactNode[] = [
  <g>{Ax}<path d="M1 3.500h4.500v3.500H1z" fill="#fff" /><path d="M5.500 3.500h6v3.500h-6z" fill={L} stroke={B} /><path d="M1 11.500h7v3.500H1z" fill="#fff" /><path d="M8 11.500h7.500v3.500H8z" fill={G} stroke="#8a8886" /></g>,
  <g>{Ax}<path d="M3.500 11.500h4v6h-4zM11.500 9.500h4v8h-4z" fill="#fff" /><path d="M3.500 5.500h4v6h-4z" fill={L} stroke={B} /><path d="M11.500 2.500h4v7h-4z" fill={G} stroke="#8a8886" /></g>,
  <g>{Ax}<path d="M1 1.500h16.500v4H1z" fill={L} stroke={B} /><path d="M1 5.500h10v3H1zM1 13h12v3.500H1z" fill="#fff" /><path d="M1 8.500h6.500v4H1z" fill={G} stroke="#8a8886" /></g>,
  <g>{Ax}<path d="M1.500 1.500h4v16h-4z" fill={L} stroke={B} /><path d="M5.500 7.500h4v10h-4zM13.500 5.500h4v12h-4z" fill="#fff" /><path d="M9.500 10.500h4v7h-4z" fill={G} stroke="#8a8886" /></g>,
  <g>{Ax}<path d="M1 3.500h5v4H1zM1 11.500h9v3.500H1z" fill="#fff" /><path d="M5 3.500h11v4H5z" fill={L} stroke={B} /><path d="M10 11.500h6v3.500h-6z" fill={G} stroke="#8a8886" /></g>,
  <g>{Ax}<path d="M3.500 12.500h4v5h-4zM11.500 7.500h4v10h-4z" fill="#fff" /><path d="M3.500 2.500h4v10h-4z" fill={L} stroke={B} /><path d="M11.500 2.500h4v5h-4z" fill={G} stroke="#8a8886" /></g>,
  <g>{Ax}<path d="M1 12.500l6.500-7 4 4.500 6-6" stroke="#2a8dd4" strokeWidth="1.400" /><path d="M1 10l5-5 5 5.500 3.500-6.500 3.500 1.500" strokeWidth="1.300" /></g>,
  <g><path d="M1 12 7.500 1.500 14 12v5.500H1z" fill="#fff" /><path d="M8 9l5.500-8.500L17.500 8v9.500H8z" fill={G} stroke="#8a8886" /><path d="M.5 17.500 4 12l2-1.500L10.500 9l6.500 8.500z" fill={L} stroke={B} /></g>,
  <g>{Ax}<path d="M1 4l3-1 4.500 4.500L14 1.500 18 4v8l-3-2.500-5 5L5 9.500l-4 4z" fill={L} stroke={B} /></g>,
  <g>{Ax}<path d="M3.500 1.500h4v16h-4z" fill={L} stroke={B} /><path d="M11.500 2.500h4v15h-4z" fill={G} stroke="#8a8886" /><path d="M3.500 12h4v5.500h-4zM11.500 10h4v7.500h-4z" fill="#fff" /><path d="M1 15l5-6 4 5 3-4 4 4" /></g>,
  <g>{Ax}<path d="M3.500 9.500h4v8h-4z" fill={L} stroke={B} /><path d="M7.500 1.500h4v16h-4z" fill="#fff" /><path d="M11.500 5.500h4v12h-4z" fill={G} stroke="#8a8886" /><path d="M1 15l6-3 3 2 3-6 4 4" /></g>,
  <g>{Ax}<path d="M1 10h4v5H1zM13 10.500h4v4.500h-4z" fill="#f39b3c" stroke="#e07714" /><path d="M1 2l3 1.500L9 7l5-3.500 3.500-2V7L13 8l-3.500 2.500L5 8 1 7z" fill={G} stroke="#605e5c" /><path d="M1 6c5 0 4 7 8 7s4-8 8.500-7v4.500c-4-1-4 6-8.500 6s-4-6.500-8-6z" fill={L} stroke={B} /></g>,
  <g>{Ax}<path d="M2.500 4.500h4v13h-4zM6.500 4.500h3v3h-3M9.500 7v10.500M13.500 1.500h3.500v16h-3.500z" fill="#fff" /><path d="M11.500 1.500h2v9h-2z" fill={L} stroke={B} /></g>,
  <g fill={L} stroke={B}><path d="M.5 1.500h17v5H.5zM3.500 6.500h11v5h-11zM6.500 11.500h5v5h-5z" /></g>,
  <g>{Ax}<g stroke="none"><path d="M13 1h3v3h-3zM3 12h3v3H3z" fill={D} /><path d="M3 4h3v3H3zM8 7h3v3H8zM13 11h3v3h-3z" fill={L} /></g></g>,
  <g><circle cx="9" cy="9" r="8.500" fill="#fff" /><path d="M9 .5V9l6 6A8.500 8.500 0 0 0 9 .5z" fill={L} stroke={B} /></g>,
  <g><circle cx="9" cy="9" r="8.500" fill={L} stroke={B} /><path d="M9 .5A8.500 8.500 0 0 0 .5 9H5a4 4 0 0 1 4-4z" fill="#fff" /><circle cx="9" cy="9" r="4" fill="#f3f2f1" stroke={B} /></g>,
  <g><path d="M.5.5h17v17H.5z" fill="#fff" /><path d="M.5.5h8v8h-8zM.5 8.500h8v9h-8z" fill={L} stroke={B} /><path d="M8.500 5.500h9M12.500 5.500v7M8.500 12.500h9M12.500 9.500v8" /></g>,
  <g><circle cx="9.500" cy="7.500" r="6" fill="#fff" /><path d="M6 3l4 0-1 4-4 1zM10.500 9l4-2-1 5-3 1z" fill="#2b8a4b" stroke="none" /><path d="M4 1C1 4 1 11 5 14c3 2 7 1.500 9.500-.5M9 15.500v2M4 17.500h11" /></g>,
  <g><path d="M.5 1.500h5l4 1.500 4-1.500 4 .5v8l-1 2v3.500l-5 1-2.500-2-4-.5-2-4-2-1.500z" fill="#c8c6c4" stroke="#605e5c" /><path d="M.5 1.500h8L7.500 7 4.500 9.500h-3.500zM10 9.500l7.500-.5v4l-1 3-5 1-2.500-2.500z" fill={L} stroke={B} /></g>,
  <g stroke="none"><path d="M12 0 0 17.500 9 12z" fill="#2595c9" /><path d="M12 0l5 17.500L9 12z" fill="#4db6df" /><path d="M9 12l8 5.500-1.500-5.500z" fill="#1763a8" /></g>,
  <g><path d="M.5 13A8.500 8.500 0 0 1 5 5.500L7 9a5 5 0 0 0-2.500 4z" fill="#fff" /><path d="M5 5.500a8.500 8.500 0 0 1 12.500 7.500h-4A5 5 0 0 0 7 9z" fill={L} stroke={B} /><path d="M8.500 13 12 7.500" strokeWidth="1.800" /></g>,
  <g><path d="M.5 2.500h17v13H.5z" fill="#fff" /><text x="1.800" y="11.200" fontSize="8" fontWeight="600" fill="#1e83cf" stroke="none" textLength="14.400" lengthAdjust="spacingAndGlyphs">123</text><path d="M3 13.500h12" stroke="#8a8886" /></g>,
  <g><path d="M.5.500h17v17H.5z" fill="#fff" /><path d="M3.500 3v12" /><path d="M5 5.500h10M5 11.500h7" stroke={B} strokeWidth="2" /><path d="M5 8.500h6M5 14.500h5" stroke="#a19f9d" /></g>,
  <g><path d="M.5 2.500h17v13H.5z" fill="#fff" /><path d="M2.500 10h6l-3-5.500z" fill="#35a05e" stroke="none" /><path d="M9.500 4.500h6l-3 5.500z" fill="#d9373b" stroke="none" /><path d="M3 12.500h12" stroke="#8a8886" /></g>,
  <g><path d="M9 16.500H.5v-15h17V9M.5 4.500h17" /><path d="M.5 1.500h17v3H.5z" fill={G} /><path d="M3.500 7.500H7V11H3.500zM3.500 12.500H7v3H3.500z" fill={G} stroke="#8a8886" /><path d="M9 9.500h9l-3 4v4h-2.500v-4z" fill="#fff" /></g>,
  <g><path d="M.5 1.500h17v15H.5zM.5 8.500h17M.5 12.500h17M6 4v13M12 4v13" fill="#fff" stroke="#605e5c" /><path d="M.5 1h17v3.500H.5z" fill={G} /></g>,
  <g><path d="M.5 1.500h17v15H.5z" fill="#fff" /><path d="M12 4.500h5.500v12H.5v-4H12z" fill={L} stroke={B} /><path d="M.5 8.500h17M.5 12.500h17M6 4v13M12 4v13" stroke={B} /><path d="M.5 1h17v3.500H.5z" fill={G} /><path d="M.5 1v16h17V1" /></g>,
  <text x="4" y="14.200" fontSize="15" fontWeight="700" fill="#2a8dc8" stroke="none" textLength="9.500" lengthAdjust="spacingAndGlyphs">R</text>,
  <text x="-1" y="13" fontSize="16" fontWeight="600" fill="#2a8dc8" stroke="none" textLength="18.500" lengthAdjust="spacingAndGlyphs">Py</text>,
  <g>{Ax}<path d="M1 3.500h11" stroke={B} /><circle cx="14.500" cy="3.500" r="2" fill={L} stroke={B} /><path d="M1 8.500h8M1 13.500h4" stroke="#8a8886" /><path d="M9 7h3v3H9zM5 12h3v3H5z" fill={G} stroke="#605e5c" /></g>,
  <g fill={L} stroke={B}><path d="M5.500 9h5.500M11 3.500H8.500v11H11" stroke={D} fill="none" /><path d="M.5 7h6v4h-6zM11 1h6.500v4H11zM11 7h6.500v4H11zM11 13h6.500v4H11z" /></g>,
  <path d="M.5 1.500h17v11H7l-3.500 4v-4h-3z" fill="#fff" stroke={B} strokeWidth="1.200" />,
  <g><path d="M3.500 11.500v6h12V4.500l-4-4H3.500V4M11 .5v4.500h4.500" fill="#fff" /><path d="M1.500 5.500h3.500V9H1.500z" fill={L} stroke={B} /><path d="M8 9.500h5M5.500 12.500h5" stroke={B} /></g>,
  <g><path d="M5 1.500h8v7c0 4-8 4-8 0z" fill="#fff" strokeWidth="1.300" /><path d="M4.500.500h9V3h-9z" fill={L} stroke={B} /><path d="M5 3.500H.700c0 4 2 6 5 6M13 3.500h4.300c0 4-2 6-5 6M9 11.500v3.500M5.500 17.500v-2h7v2z" fill="none" /></g>,
  <g strokeWidth="1.400"><path d="M2-.5h9l5 5v13.800H2z" fill="#fff" stroke="#605e5c" /><path d="M5.500 15.500v-4M8.500 15.500v-3M11.500 15.500V9M13.700 15.500v-5" strokeWidth="2" /><path d="M11-.5v5.500h5" /></g>,
  <g><path d="M.5 10v6.500h17v-13H9" fill="#fff" /><text x="4" y="12.500" fontSize="8.500" fontWeight="600" fill="#1e83cf" stroke="none" textLength="13" lengthAdjust="spacingAndGlyphs">123</text><path d="M4 14.500h11" stroke="#8a8886" /><Bolt /></g>,
  <g><path d="M.5 11v5.500H9M9 1.500h8.500V8M9 4.500h8" /><path d="M9 1.500h8.500v3H8z" fill={G} /><path d="M4 12h3v3H4z" fill={G} stroke="#8a8886" /><path d="M9 9.500h9l-3 4v4h-2.500v-4z" fill="#fff" /><Bolt /></g>,
  <g><path d="M6.500 1.500h11v10M.5 10v7.500h11" stroke="#2a8dd4" fill="none" /><path d="M17 2.500v3l-2.500 1v3l-3 1-1 5-4 1.500H3v-2.500l4-1.500.5-4.500L10 6V4z" fill={L} stroke={B} strokeWidth=".8" /><path d="M0 0h5.500v6L2.700 10 0 6z" fill="#d8641a" stroke="none" /><circle cx="2.700" cy="3" r="1" fill="#fff" stroke="none" /><circle cx="16" cy="15.500" r="2.500" fill="#d8641a" stroke="none" /><path d="M14.500 10.500h3.500v2h-3.500z" fill="#d8641a" stroke="none" /></g>,
  <g stroke="#9b3fa3" strokeWidth="1.200"><path d="M7.500 1.200q1.500-1.200 3 0l6.500 6.300q1.300 1.500 0 3l-6.500 6.300q-1.500 1.200-3 0L1 10.500q-1.300-1.500 0-3z" fill="#fff" /><path d="M9 9 5.800 5.800a2.200 2.200 0 0 1 3.200-3.200 2.200 2.200 0 0 1 3.200 3.200L5.800 12.200a2.200 2.200 0 0 0 3.200 3.200 2.200 2.200 0 0 0 3.200-3.200z" /></g>,
  <g stroke="#2b7cd8" strokeWidth="1.200"><path d="M.7 2h11.500l5.500 7-5.500 7H.7l5.600-7z" fill="#fff" /><path d="M3.500 5.500h4.500l3 3.500-7 6.500M7 2l5.500 6.500L8.500 16" strokeWidth="1" /></g>,
  <g stroke="none"><path d="M1 8h2v2H1z" fill="#e07714" /><path d="M8 8h2v2H8z" fill="#c0622b" /><path d="M15 8h2v2h-2z" fill="#e07714" /></g>,
];

function VizPane() {
  return (
    <div className="flex w-[181px] shrink-0 flex-col border-l border-[#dbd9d7] bg-[#f3f2f1] text-[12px] text-[#323130]">
      <div className="flex h-[38px] items-center justify-between pl-2 pr-[7px]">
        <span className="mt-px text-[15px] font-semibold tracking-[-0.05px] text-[#201f1e]">Visualizations</span>
        <DoubleChevron />
      </div>
      <div className="mt-px h-[18px] pl-2 text-[11.500px] font-semibold leading-[13px] tracking-[-0.15px]">Build visual</div>
      <div className="flex h-8 pl-2">
        <div className="flex h-8 w-8 items-center justify-center rounded-sm bg-[#d2d0ce]">
          <svg width="25" height="26" viewBox="0 0 25 26" fill="#117865" stroke="#201f1e" strokeWidth="1.300">
            <path d="M.5 1.500h19" /><path d="M1 6.500h23v7H1zM1 17.500h23v7H1z" strokeDasharray="2 1" />
          </svg>
        </div>
        <svg className="ml-[37px] mt-1" width="26" height="25" viewBox="0 0 26 25" fill="none" stroke={D} strokeWidth="1.200">
          <path d="M5.500 23.500H1.500V.8h11l5.500 6.500v2.500M12.500.8v7H18" />
          <path d="M6 23.500c3-.5 2.500-3.500 4.500-5.500 1.500-1.500 4 .5 3.500 2.500-.5 3-4 3.500-8 3zM11.500 17.500 24 8.500c.8-.3 1.200.3.8 1L14.500 20.500" fill="#fff" />
        </svg>
      </div>
      <svg className="mt-1" width="180" height="10" viewBox="0 0 180 10" fill="none" stroke="#8a8886" strokeWidth="1"><path d="M0 8.500h16.500l7.500-7.500 7.500 7.500H180" /></svg>
      <div className="mt-[5px] grid h-[196px] grid-cols-[repeat(6,28px)] grid-rows-[repeat(7,28px)] pl-1.5">
        {vizIcons.map((icon, i) => (
          <div key={i} className={`flex h-7 w-7 items-center justify-center ${i === 2 || i === 3 ? "[&>svg]:bg-[#dddbd9]" : ""}`}>
            <svg className="overflow-visible" width="18" height="18" viewBox="0 0 18 18" fill="none" stroke={D} strokeWidth="1.100" fontFamily="'Open Sans',sans-serif">{icon}</svg>
          </div>
        ))}
      </div>
      <div className="mt-1 border-t border-[#d2d0ce]" />
      <div className="mt-[9px] pl-3 leading-4 tracking-[-0.3px]">Values</div>
      <div className="ml-1 mt-[5px] flex h-7 w-[170px] items-center border border-dashed border-[#c8c6c4] bg-white pl-2.5 pt-px tracking-[-0.28px]">Add data fields here</div>
      <div className="mt-[11px] pl-3 font-semibold leading-4 tracking-[-0.25px] text-[#484644]">Drill through</div>
      <div className="mt-[9px] flex h-4 items-center justify-between pl-3 pr-[22px] tracking-[-0.3px]">
        <span>Cross-report</span>
        <span className="flex h-4 w-8 items-center gap-0.5 rounded-full border border-[#8a8886] bg-white pl-1 text-[9.500px] text-[#605e5c]"><i className="h-2 w-2 shrink-0 rounded-full bg-[#605e5c]" />Off</span>
      </div>
      <div className="mt-[11px] flex h-4 items-center justify-between pl-3 pr-[22px] tracking-[-0.35px]">
        <span>Keep all filters</span>
        <span className="flex h-4 w-8 items-center gap-0.5 rounded-full bg-[#117865] pl-[5px] text-[9.500px] font-semibold text-white">On<i className="h-2 w-2 shrink-0 rounded-full bg-white" /></span>
      </div>
      <div className="ml-1 mt-2.5 flex h-[26px] w-[170px] items-center whitespace-nowrap border border-dashed border-[#c8c6c4] bg-white pl-2 pt-px tracking-[-0.24px]">Add drill-through fields here</div>
    </div>
  );
}

/* ---------- data pane ---------- */

const fields: [string, string][] = [
  ["AssetID", ""], ["Availability", "c"], ["AverageEnergy", "s"], ["AverageHumidi...", "s"], ["AveragePressure", "s"], ["AverageSpeed", "s"],
  ["AverageTempe...", "s"], ["Customer", ""], ["Line", ""], ["Manufacturer", ""], ["OEE", "c"], ["Operator", ""], ["PackagedProd...", "s"],
  ["Performance", "c"], ["PerformanceTar...", "s"], ["PlannedProduc...", "s"], ["ProductId", ""], ["Quality", "c"], ["Shift", "s"], ["Site", ""],
  ["Timestamp", ""], ["TotalGoodUnits", "s"],
];

function DataPane() {
  return (
    <div className="flex w-[181px] shrink-0 flex-col border-l border-[#dbd9d7] bg-[#f3f2f1] text-[12px] text-[#484644]">
      <div className="flex h-[38px] items-center justify-between pl-2 pr-[7px]">
        <span className="mt-px text-[15px] font-semibold tracking-[-0.2px] text-[#201f1e]">Data</span>
        <DoubleChevron />
      </div>
      <div className="ml-1 mt-[7px] flex h-[27px] w-[172px] shrink-0 items-center rounded-sm border border-[#605e5c] pl-2 text-[13px] tracking-[-0.25px]">
        <svg width="14" height="14" viewBox="0 0 14 14" fill="none" stroke="#605e5c" strokeWidth="1.100"><circle cx="8.800" cy="5.200" r="4.500" /><path d="M5.500 8.500.7 13.300" /></svg>
        <span className="ml-1.5 mt-0.5">Search</span>
      </div>
      <div className="mt-2 flex h-[543px] overflow-hidden">
        <div className="w-[167px] shrink-0 pt-px">
          <div className="flex h-6 items-center pl-[7px]">
            <svg width="12" height="7" viewBox="0 0 12 7" fill="none" stroke="#8a8886" strokeWidth="1.100"><path d="M.5.700 6 6.200 11.500.7" /></svg>
            <svg className="ml-1" width="12" height="12" viewBox="0 0 12 12" fill="none" stroke="#323130" strokeWidth="1.200"><rect x=".6" y=".6" width="10.800" height="10.800" rx="1.500" /><path d="M.6 4h10.800M.6 8h10.800M4 .6v10.800M8 .6v10.800" /></svg>
            <span className="ml-1.5 mt-0.5 tracking-[-0.4px]">OEE</span>
          </div>
          {fields.map(([name, kind]) => (
            <div key={name} className="flex h-6 items-center pl-[38px]">
              <span className="h-3 w-3 shrink-0 rounded-[2px] border border-[#8a8886]" />
              <span className="ml-2 w-3 shrink-0">
                {kind === "c" && (
                  <svg width="12" height="14" viewBox="0 0 12 14" fill="none" stroke="#323130" strokeWidth="1.100"><rect x=".6" y=".6" width="10.800" height="12.800" rx="1.500" /><path d="M3 3h6v2H3z" /><path d="M2.700 8h1.400M5.300 8h1.400M7.900 8h1.400M2.700 10.700h1.400M5.300 10.700h1.400M7.900 10.700h1.400" strokeWidth="1.500" /></svg>
                )}
                {kind === "s" && (
                  <svg width="11" height="12" viewBox="0 0 11 12" fill="none" stroke="#323130" strokeWidth="1.200"><path d="M10.200 2.500V.6H.8L6.200 6 .8 11.400h9.400V9.500" /></svg>
                )}
              </span>
              <span className="ml-1.5 mt-0.5 whitespace-nowrap tracking-[-0.4px]">{name}</span>
            </div>
          ))}
        </div>
        <div className="ml-px h-[489px] w-2 shrink-0 bg-[#c8c6c4]" />
      </div>
    </div>
  );
}

/* ---------- page ---------- */

export default function App() {
  return (
    <div className="h-[815px] w-[1200px] overflow-hidden bg-[#8a8886]">
      <div className="flex h-[815px] w-[1200px] flex-col overflow-hidden rounded-bl-[6px] bg-[#f3f2f1] font-['Open_Sans','Noto_Sans',sans-serif]">
        <TitleBar />
        <Ribbon />
        <div className="flex h-[631px] shrink-0">
          <div className="w-[41px] shrink-0 border-r border-[#dbd9d7]">
            <div className="flex h-10 items-center border-l-[3px] border-[#117865] pl-[11px]">
              <svg width="14" height="14" viewBox="0 0 14 14" fill="none" stroke="#111" strokeWidth="1.200"><path d="M.6.500v12.900H14M2.900 3.500h2v8h-2zM6.500 5.500h2v6h-2zM10.100 1.500h2v10h-2z" /></svg>
            </div>
            <svg className="ml-3 mt-[11px]" width="18" height="18" viewBox="0 0 18 18" fill="none" stroke="#605e5c" strokeWidth="1.100"><path d="M.5 5.500h7v7h-7zM.5 8.500h7M10.500.5h7v7h-7zM10.500 3.500h7M10.500 10.500h7v7h-7zM10.500 13.500h7M4 5.500v-3h6.500M4 12.500v3h6.500" /></svg>
          </div>
          <div className="flex w-[797px] shrink-0 flex-col">
            <div className="flex h-[596px] bg-white">
              <Canvas />
              <div className="flex flex-1 flex-col items-center pl-px pt-[13px]">
                <DoubleChevron left />
                <svg className="ml-0.5 mt-[15px]" width="13" height="13" viewBox="0 0 13 13" fill="none" stroke="#323130" strokeWidth="1.300"><path d="M11.800.9v11.200L7 7.500H3.300L1 5.200h6z" /></svg>
                <div className="mt-2 text-[15px] font-semibold leading-5 tracking-[-0.3px] text-[#323130] [writing-mode:vertical-rl]">Filters</div>
              </div>
            </div>
            <div className="flex h-[35px]">
              <div className="ml-2.5 mt-[7px] flex h-6 w-6 flex-col items-center justify-between border-b-[3px] border-[#117865]">
                <svg width="20" height="15" viewBox="0 0 20 15" fill="none" stroke="#605e5c" strokeWidth="1.200"><path d="M.8.800h18.400v10.400H.8zM10 11.200v2.800M5.500 14h9" /></svg>
              </div>
              <svg className="ml-[25px] mt-[5px]" width="14" height="20" viewBox="0 0 14 20" fill="none" stroke="#605e5c" strokeWidth="1.300"><rect x=".7" y=".7" width="12.600" height="18.600" rx="1" /><path d="M5.800 16.500h2.400" /></svg>
              <svg className="ml-5 mt-3.5" width="28" height="9" viewBox="0 0 28 9" fill="#c3c1bf"><path d="M5 0v9L.5 4.500zM22.500 0v9L27 4.500z" /></svg>
              <div className="ml-[6px] flex h-[34px] w-[77px] items-center justify-center border-b-[4px] border-l border-b-[#117865] border-l-[#8a8886] bg-white pt-1.5 text-[11.500px] font-semibold tracking-[-0.2px] text-[#252423]">Page 1</div>
              <div className="mt-0.5 flex h-8 w-[39px] items-center justify-center bg-[#117865]">
                <svg width="11" height="11" viewBox="0 0 11 11" stroke="#fff" strokeWidth="3"><path d="M5.500 0v11M0 5.500h11" /></svg>
              </div>
            </div>
          </div>
          <VizPane />
          <DataPane />
        </div>
        <div className="flex h-6 shrink-0 items-center border-t border-[#dbd9d7] pl-1 text-[11.800px] tracking-[-0.15px] text-[#484644]">
          <span className="mt-0.5 w-[70px] whitespace-nowrap">Page 1 of 1</span>
          <svg className="-mt-0.5" width="10" height="12" viewBox="0 0 10 12" fill="none" stroke="#605e5c" strokeWidth="1.100"><path d="M.6 5.500h8.800v6H.6zM2.500 5.500V3c0-3 5-3 5 0v2.500" /></svg>
          <span className="ml-[7px] mt-0.5 tracking-[-0.2px]">Confidential\Microsoft Extended</span>
          <span className="ml-auto mr-4 mt-0.5">Storage Mode: DirectQuery (click to change)</span>
          <svg width="126" height="12" viewBox="987 798 126 12" fill="none" stroke={D} strokeWidth="1.100">
            <path d="M988.500 803.500h4M1103.500 803.500h7M1107 800v7" /><path d="M996 803.500h101M1047.500 801v5" stroke="#605e5c" /><path d="M1023 798h4v11h-4z" fill={D} stroke="none" />
          </svg>
          <span className="ml-[11px] mt-0.5 w-[42px]">60%</span>
          <svg className="mr-[17px]" width="17" height="12" viewBox="0 0 17 12" fill="none" stroke="#605e5c" strokeWidth="1.100"><path d="M.6.600h15.800v10.800H.6z" /><path d="M3 4.500V3h2M12 3h2v1.500M14 7.500V9h-2M5 9H3V7.500" stroke="#117865" strokeWidth="1.300" /></svg>
        </div>
      </div>
    </div>
  );
}
